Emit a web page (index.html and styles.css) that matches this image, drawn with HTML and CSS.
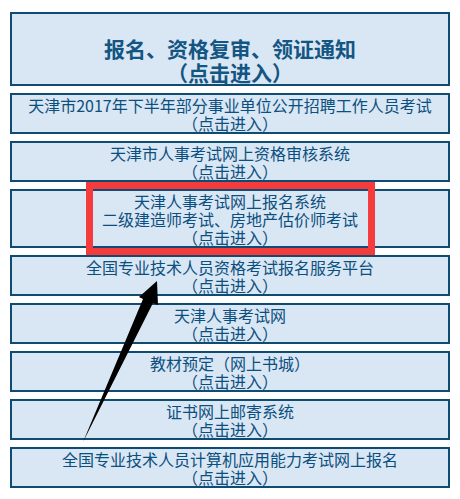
FILE: index.html
```html
<!DOCTYPE html>
<html lang="zh-CN">
<head>
<meta charset="utf-8">
<title>报名、资格复审、领证通知</title>
<link rel="stylesheet" href="styles.css">
</head>
<body>
<div class="page">
  <div class="list">
    <a class="item title-item" href="#">报名、资格复审、领证通知<br>（点击进入）</a>
    <a class="item" href="#">天津市2017年下半年部分事业单位公开招聘工作人员考试<br>（点击进入）</a>
    <a class="item" href="#">天津市人事考试网上资格审核系统<br>（点击进入）</a>
    <a class="item" href="#">天津人事考试网上报名系统<br>二级建造师考试、房地产估价师考试<br>（点击进入）</a>
    <a class="item" href="#">全国专业技术人员资格考试报名服务平台<br>（点击进入）</a>
    <a class="item" href="#">天津人事考试网<br>（点击进入）</a>
    <a class="item" href="#">教材预定（网上书城）<br>（点击进入）</a>
    <a class="item" href="#">证书网上邮寄系统<br>（点击进入）</a>
    <a class="item" href="#">全国专业技术人员计算机应用能力考试网上报名<br>（点击进入）</a>
  </div>
  <div class="highlight"></div>
  <svg class="arrow" width="460" height="499" viewBox="0 0 460 499" xmlns="http://www.w3.org/2000/svg">
    <polygon points="157,281 158,305 153,303 83,442 143,299 139,297" fill="#000"/>
  </svg>
</div>
</body>
</html>
```
FILE: styles.css
```css
html, body {
  margin: 0;
  padding: 0;
  background: #ffffff;
}
.page {
  position: relative;
  width: 460px;
  height: 499px;
  font-family: "Noto Sans CJK SC", "Liberation Sans", sans-serif;
}
.list {
  display: flex;
  flex-direction: column;
  gap: 7px;
  padding: 12px 0 0 10px;
  width: 440px;
}
.item {
  display: block;
  box-sizing: border-box;
  background: #d9e6f3;
  border: 2px solid #0e4c72;
  color: #0b4f7f;
  text-align: center;
  font-size: 16px;
  line-height: 18px;
  padding: 1px 0 0;
  text-decoration: none;
}
.title-item {
  font-size: 21px;
  font-weight: bold;
  line-height: 24px;
  padding: 22px 0 0;
  color: #135583;
}
.highlight {
  position: absolute;
  left: 86px;
  top: 182px;
  width: 289px;
  height: 73px;
  box-sizing: border-box;
  border: 7px solid #f53b3b;
}
.arrow {
  position: absolute;
  left: 0;
  top: 0;
  pointer-events: none;
}
```
